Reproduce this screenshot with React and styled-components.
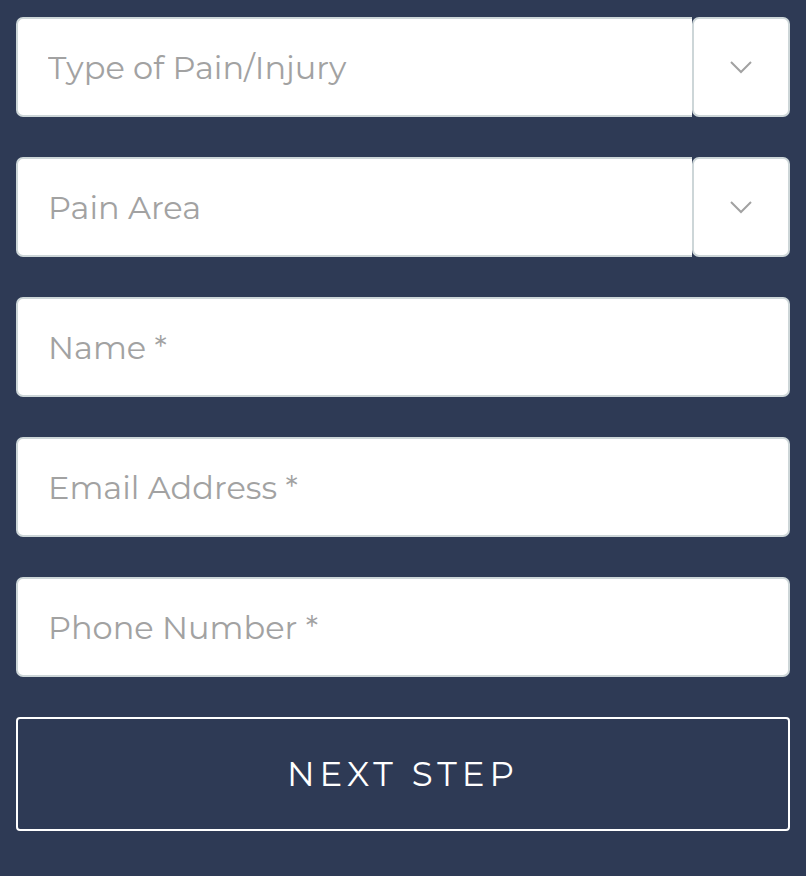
import React from 'react'
import styled, { createGlobalStyle } from 'styled-components'

const Global = createGlobalStyle`
  html, body {
    margin: 0;
    padding: 0;
    background: #2e3a55;
  }
  * { box-sizing: border-box; }
`

const Form = styled.form`
  display: flex;
  flex-direction: column;
  gap: 40px;
  padding: 17px 16px;
  font-family: Montserrat, "DejaVu Sans", sans-serif;
`

const Group = styled.div`
  display: flex;
  height: 100px;
`

const Input = styled.input`
  flex: 1;
  min-width: 0;
  height: 100%;
  padding: 0 30px;
  border: 2px solid #cdd6d8;
  border-right: ${p => (p.$addon ? 'none' : '2px solid #cdd6d8')};
  border-radius: ${p => (p.$addon ? '7px 0 0 7px' : '7px')};
  background: #fff;
  font-family: inherit;
  font-size: 32px;
  color: #444;
  outline: none;

  &::placeholder {
    color: #a2a2a2;
  }
`

const Addon = styled.div`
  width: 98px;
  flex: none;
  display: flex;
  align-items: center;
  justify-content: center;
  background: #fff;
  border: 2px solid #cdd6d8;
  border-radius: 7px;
`

const Button = styled.button`
  height: 114px;
  background: transparent;
  border: 2px solid #fff;
  border-radius: 4px;
  color: #fff;
  font-family: inherit;
  font-size: 34px;
  letter-spacing: 5px;
  padding: 0;
  text-transform: uppercase;
  cursor: pointer;
`

function Chevron() {
  return (
    <svg width="24" height="14" viewBox="0 0 24 14" fill="none">
      <path d="M2 2 L12 12 L22 2" stroke="#a2a2a2" strokeWidth="2" />
    </svg>
  )
}

function SelectField({ placeholder }) {
  return (
    <Group>
      <Input $addon placeholder={placeholder} readOnly />
      <Addon>
        <Chevron />
      </Addon>
    </Group>
  )
}

function TextField({ placeholder, type }) {
  return (
    <Group>
      <Input type={type} placeholder={placeholder} />
    </Group>
  )
}

export default function App() {
  return (
    <>
      <Global />
      <Form onSubmit={e => e.preventDefault()}>
        <SelectField placeholder="Type of Pain/Injury" />
        <SelectField placeholder="Pain Area" />
        <TextField placeholder="Name *" />
        <TextField type="email" placeholder="Email Address *" />
        <TextField type="tel" placeholder="Phone Number *" />
        <Button type="submit">Next Step</Button>
      </Form>
    </>
  )
}
